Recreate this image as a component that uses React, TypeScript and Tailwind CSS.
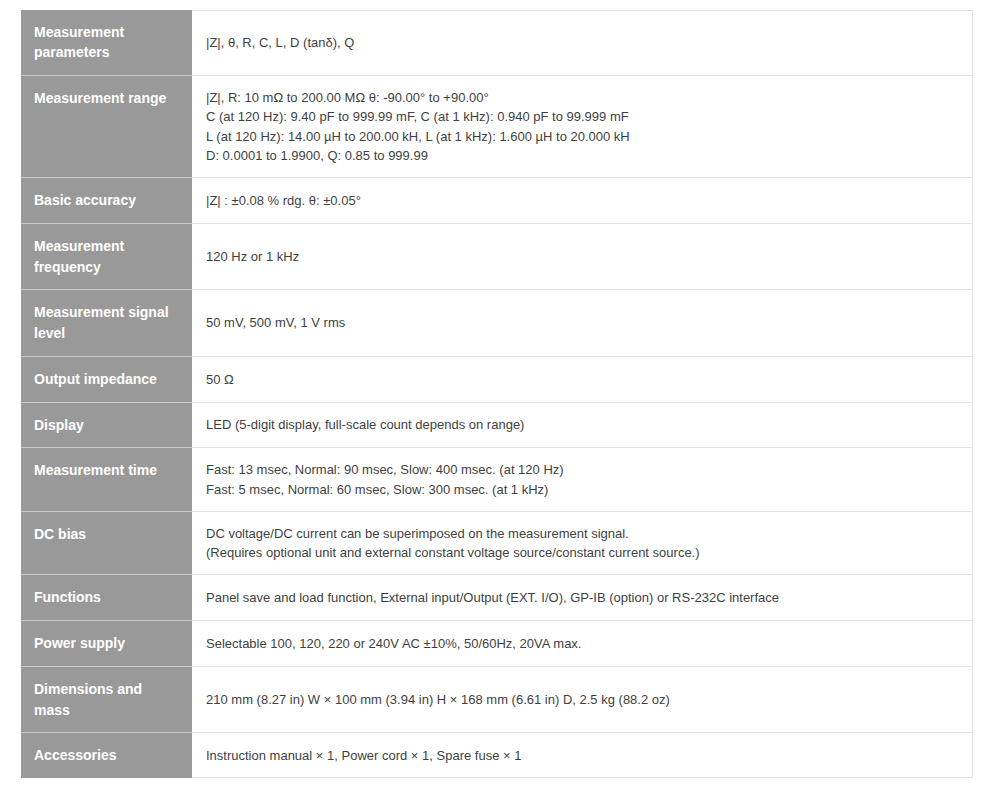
const specs: { label: string; value: string[] }[] = [
  { label: "Measurement parameters", value: ["|Z|, θ, R, C, L, D (tanδ), Q"] },
  {
    label: "Measurement range",
    value: [
      "|Z|, R: 10 mΩ to 200.00 MΩ θ: -90.00° to +90.00°",
      "C (at 120 Hz): 9.40 pF to 999.99 mF, C (at 1 kHz): 0.940 pF to 99.999 mF",
      "L (at 120 Hz): 14.00 µH to 200.00 kH, L (at 1 kHz): 1.600 µH to 20.000 kH",
      "D: 0.0001 to 1.9900, Q: 0.85 to 999.99",
    ],
  },
  { label: "Basic accuracy", value: ["|Z| : ±0.08 % rdg. θ: ±0.05°"] },
  { label: "Measurement frequency", value: ["120 Hz or 1 kHz"] },
  { label: "Measurement signal level", value: ["50 mV, 500 mV, 1 V rms"] },
  { label: "Output impedance", value: ["50 Ω"] },
  { label: "Display", value: ["LED (5-digit display, full-scale count depends on range)"] },
  {
    label: "Measurement time",
    value: [
      "Fast: 13 msec, Normal: 90 msec, Slow: 400 msec. (at 120 Hz)",
      "Fast: 5 msec, Normal: 60 msec, Slow: 300 msec. (at 1 kHz)",
    ],
  },
  {
    label: "DC bias",
    value: [
      "DC voltage/DC current can be superimposed on the measurement signal.",
      "(Requires optional unit and external constant voltage source/constant current source.)",
    ],
  },
  {
    label: "Functions",
    value: ["Panel save and load function, External input/Output (EXT. I/O), GP-IB (option) or RS-232C interface"],
  },
  { label: "Power supply", value: ["Selectable 100, 120, 220 or 240V AC ±10%, 50/60Hz, 20VA max."] },
  {
    label: "Dimensions and mass",
    value: ["210 mm (8.27 in) W × 100 mm (3.94 in) H × 168 mm (6.61 in) D, 2.5 kg (88.2 oz)"],
  },
  { label: "Accessories", value: ["Instruction manual × 1, Power cord × 1, Spare fuse × 1"] },
];

export default function App() {
  return (
    <div className="min-h-screen bg-white pt-[9.5px] font-['Liberation_Sans',Arial,sans-serif]">
      <table className="ml-[21px] w-[952px] border-separate border-spacing-0">
        <tbody>
          {specs.map((row, i) => (
            <tr key={row.label}>
              <th
                className={`w-[171px] bg-[#999999] px-[13px] py-3 text-left align-top text-[14px] font-bold leading-[20.75px] text-white ${
                  i < specs.length - 1 ? "border-b border-[#c9c9c9]" : ""
                }`}
              >
                {row.label}
              </th>
              <td
                className={`border-b border-r border-[#e2e2e2] px-[14px] py-3 align-middle text-[13px] leading-[19.25px] text-[#3f3f3f] ${
                  i === 0 ? "border-t" : ""
                }`}
              >
                {row.value.map((line) => (
                  <div key={line}>{line}</div>
                ))}
              </td>
            </tr>
          ))}
        </tbody>
      </table>
    </div>
  );
}
